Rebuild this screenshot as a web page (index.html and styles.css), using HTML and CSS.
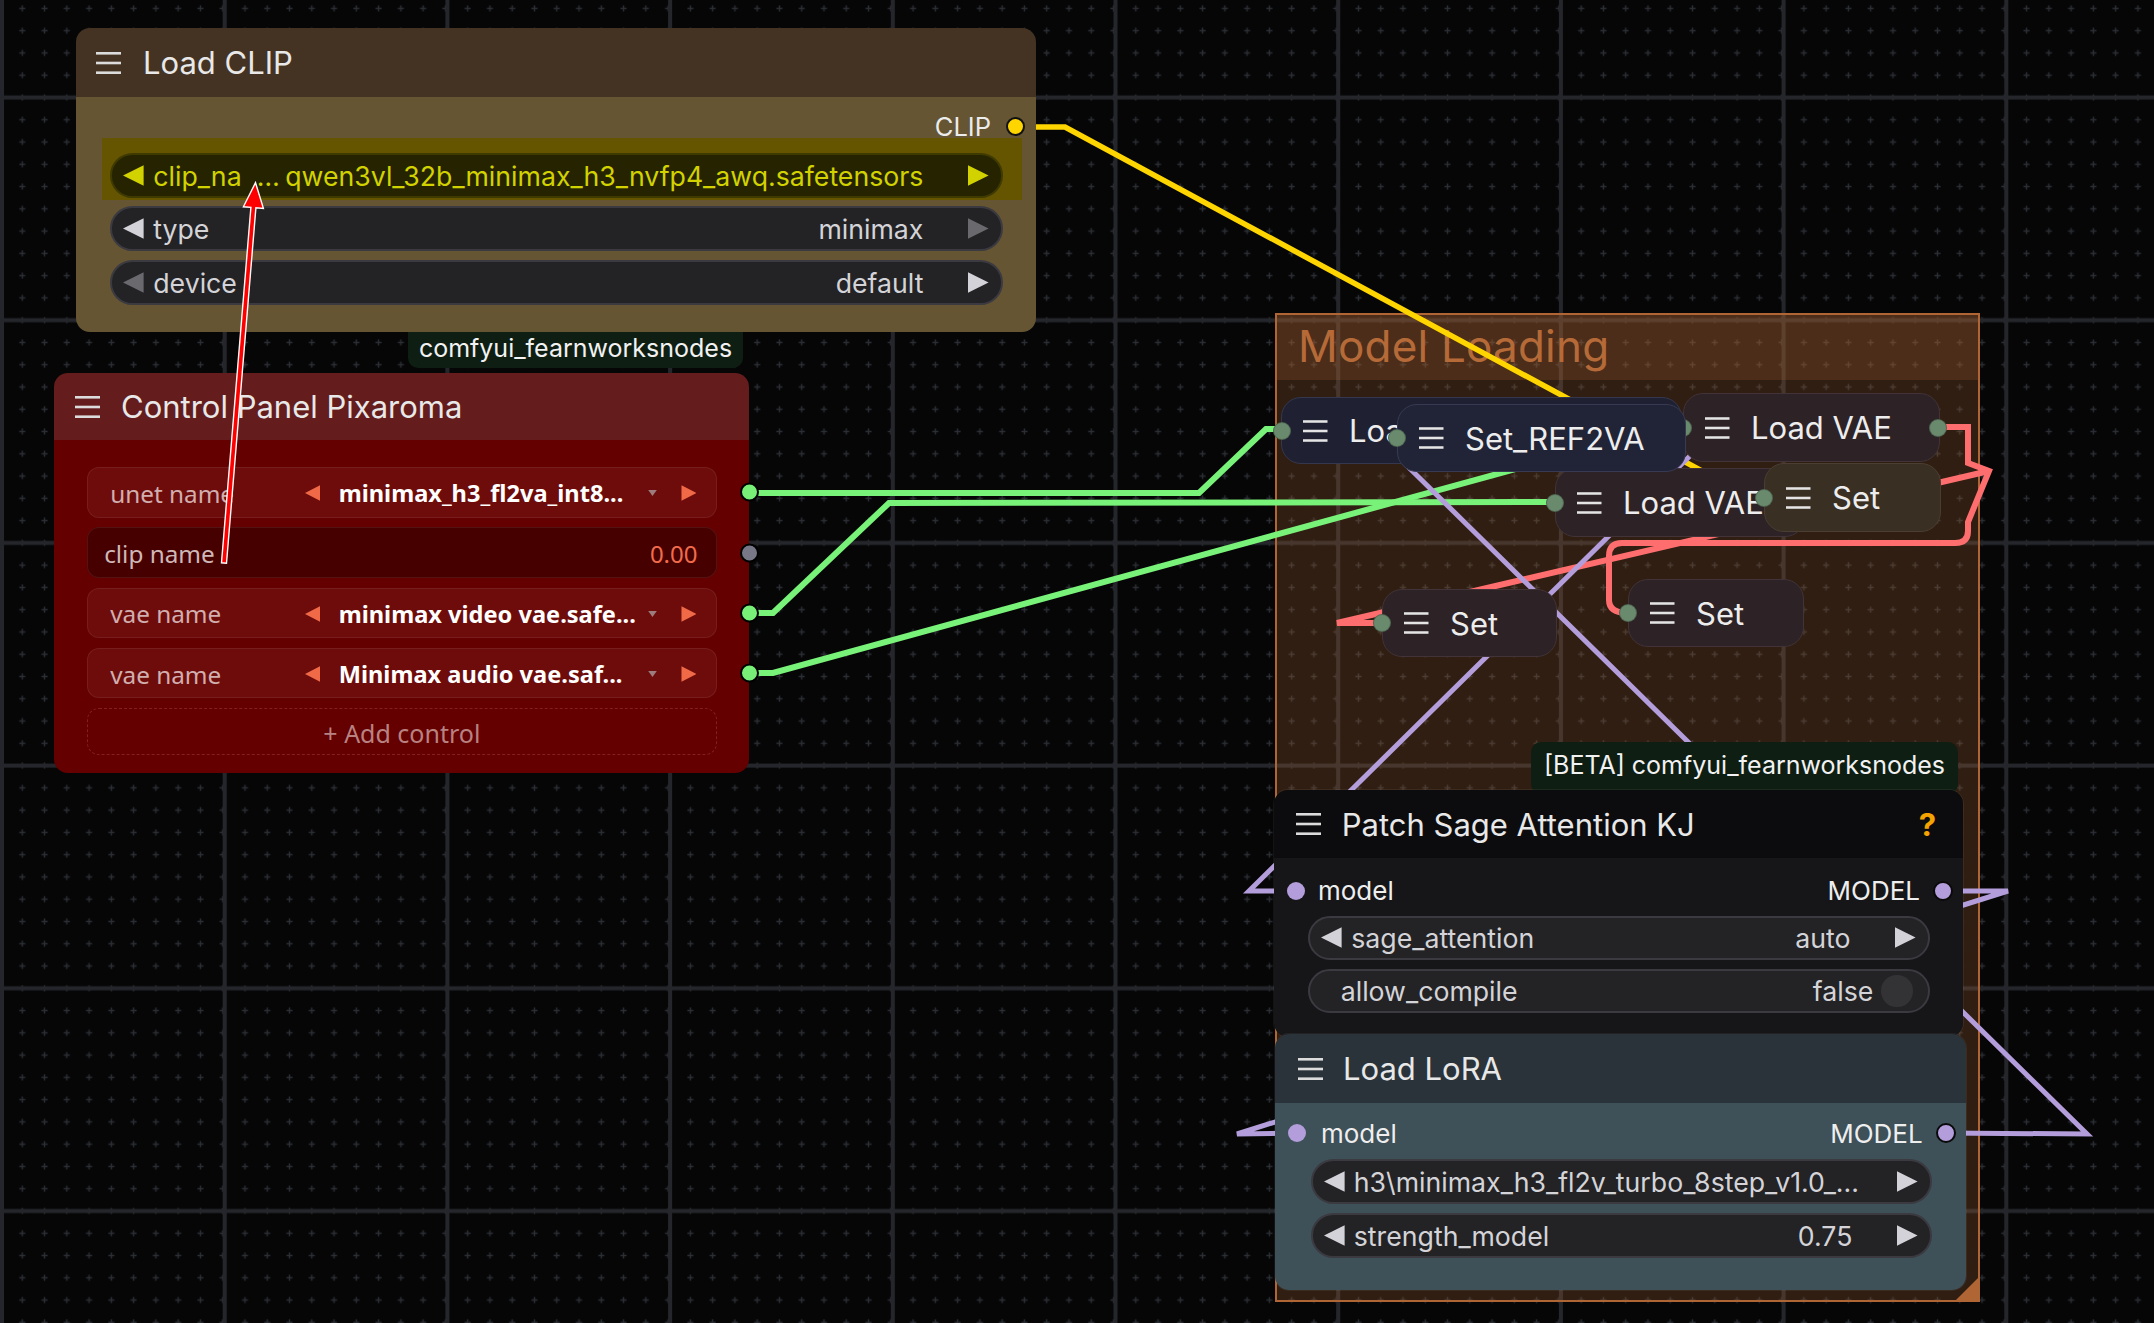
FILE: index.html
```html
<!DOCTYPE html>
<html lang="en">
<head>
<meta charset="utf-8">
<title>ComfyUI canvas</title>
<link rel="stylesheet" href="styles.css">
</head>
<body>
<div class="canvas">

  <svg class="layer" viewBox="0 0 2154 1323" width="2154" height="1323">
    <defs>
      <pattern id="dots" patternUnits="userSpaceOnUse" x="-11.135" y="-2.735" width="22.27" height="22.27">
        <rect x="8.135" y="10.435" width="6" height="1.4" fill="#2b2e34"/>
        <rect x="10.435" y="8.135" width="1.4" height="6" fill="#2b2e34"/>
      </pattern>
      <pattern id="lines" patternUnits="userSpaceOnUse" x="0" y="0" width="222.7" height="222.7">
        <rect x="0" y="0" width="4" height="222.7" fill="#24262b"/>
        <rect x="0" y="95.5" width="222.7" height="4" fill="#24262b"/>
      </pattern>
    </defs>
    <rect width="2154" height="1323" fill="#060607"/>
    <rect width="2154" height="1323" fill="url(#dots)"/>
    <rect width="2154" height="1323" fill="url(#lines)"/>
  </svg>

  <section class="group">
    <div class="group-head">Model Loading</div>
    <div class="group-resize"></div>
  </section>

  <svg class="layer links" viewBox="0 0 2154 1323" width="2154" height="1323">
    <polyline class="lk lk-clip" points="1034,127 1065,127 1750,497 1764,497"/>
    <polyline class="lk lk-green" points="749,493 1199,493 1266,429 1282,429"/>
    <polyline class="lk lk-green" points="749,613 773,613 889,503 1555,502"/>
    <polyline class="lk lk-green" points="749,673 773,673 1668,427 1683,427"/>
    <path class="lk lk-vae" d="M1939,427 L1968,427 L1968,463 L1989,471 L1968,522 L1968,531 Q1968,543 1955,543 L1622,543 Q1609,543 1609,556 L1609,600 Q1609,613 1628,613"/>
    <polyline class="lk lk-vae" points="1989,471 1337,623 1382,623"/>
    <polyline class="lk lk-model" points="1945,1133 2087,1134 1390,449"/>
    <polyline class="lk lk-model" points="1700,446 1249,891 1296,891"/>
    <polyline class="lk lk-model" points="1943,891 2008,891 1237,1134 1297,1133"/>
  </svg>

  <div class="badge badge-cp">comfyui_fearnworksnodes</div>

  <div class="node n-clip">
    <div class="node-title">
      <svg class="menu" viewBox="0 0 25 22"><rect y="0" width="25" height="2.6"/><rect y="9.7" width="25" height="2.6"/><rect y="19.4" width="25" height="2.6"/></svg>
      <span>Load CLIP</span>
    </div>
    <div class="node-body">
      <div class="out-row">
        <span>CLIP</span>
        <span class="port port-clip"></span>
      </div>
      <div class="hl">
        <div class="pill pill-hl">
          <svg class="arr" viewBox="0 0 22 21"><path d="M21 0L0 10.5L21 21Z"/></svg>
          <span class="lbl">clip_na  …</span>
          <span class="val">qwen3vl_32b_minimax_h3_nvfp4_awq.safetensors</span>
          <svg class="arr" viewBox="0 0 22 21"><path d="M1 0L22 10.5L1 21Z"/></svg>
        </div>
      </div>
      <div class="pill pill-clip">
        <svg class="arr" viewBox="0 0 22 21"><path d="M21 0L0 10.5L21 21Z"/></svg>
        <span class="lbl">type</span>
        <span class="val">minimax</span>
        <svg class="arr dim" viewBox="0 0 22 21"><path d="M1 0L22 10.5L1 21Z"/></svg>
      </div>
      <div class="pill pill-clip pill-gap">
        <svg class="arr dim" viewBox="0 0 22 21"><path d="M21 0L0 10.5L21 21Z"/></svg>
        <span class="lbl">device</span>
        <span class="val">default</span>
        <svg class="arr" viewBox="0 0 22 21"><path d="M1 0L22 10.5L1 21Z"/></svg>
      </div>
    </div>
  </div>

  <div class="node n-cp">
    <div class="node-title">
      <svg class="menu" viewBox="0 0 25 22"><rect y="0" width="25" height="2.6"/><rect y="9.7" width="25" height="2.6"/><rect y="19.4" width="25" height="2.6"/></svg>
      <span>Control Panel Pixaroma</span>
    </div>
    <div class="node-body">
      <div class="cp-row">
        <span class="cp-lbl">unet name</span>
        <svg class="cp-arr" viewBox="0 0 16 16"><path d="M15.5 0L0 8L15.5 16Z"/></svg>
        <span class="cp-val">minimax_h3_fl2va_int8...</span>
        <svg class="cp-drop" viewBox="0 0 10 7"><path d="M0 0L10 0L5 7Z"/></svg>
        <svg class="cp-arr" viewBox="0 0 16 16"><path d="M0.5 0L16 8L0.5 16Z"/></svg>
        <span class="port port-green"></span>
      </div>
      <div class="cp-row cp-num">
        <span class="cp-lbl">clip name</span>
        <span class="cp-numval">0.00</span>
        <span class="port port-gray"></span>
      </div>
      <div class="cp-row">
        <span class="cp-lbl">vae name</span>
        <svg class="cp-arr" viewBox="0 0 16 16"><path d="M15.5 0L0 8L15.5 16Z"/></svg>
        <span class="cp-val">minimax video vae.safe...</span>
        <svg class="cp-drop" viewBox="0 0 10 7"><path d="M0 0L10 0L5 7Z"/></svg>
        <svg class="cp-arr" viewBox="0 0 16 16"><path d="M0.5 0L16 8L0.5 16Z"/></svg>
        <span class="port port-green"></span>
      </div>
      <div class="cp-row">
        <span class="cp-lbl">vae name</span>
        <svg class="cp-arr" viewBox="0 0 16 16"><path d="M15.5 0L0 8L15.5 16Z"/></svg>
        <span class="cp-val">Minimax audio vae.saf...</span>
        <svg class="cp-drop" viewBox="0 0 10 7"><path d="M0 0L10 0L5 7Z"/></svg>
        <svg class="cp-arr" viewBox="0 0 16 16"><path d="M0.5 0L16 8L0.5 16Z"/></svg>
        <span class="port port-green"></span>
      </div>
      <div class="cp-add">+ Add control</div>
    </div>
  </div>

  <div class="cnode c-lo"><span class="port port-c port-in"></span>
    <svg class="menu" viewBox="0 0 25 22"><rect y="0" width="25" height="2.6"/><rect y="9.7" width="25" height="2.6"/><rect y="19.4" width="25" height="2.6"/></svg>
    <span class="ctext">Load</span>
  </div>
  <div class="cnode c-vae1"><span class="port port-c port-in"></span>
    <svg class="menu" viewBox="0 0 25 22"><rect y="0" width="25" height="2.6"/><rect y="9.7" width="25" height="2.6"/><rect y="19.4" width="25" height="2.6"/></svg>
    <span class="ctext">Load VAE</span>
    <span class="port port-c port-out"></span>
  </div>
  <div class="cnode c-vae2"><span class="port port-c port-in"></span>
    <svg class="menu" viewBox="0 0 25 22"><rect y="0" width="25" height="2.6"/><rect y="9.7" width="25" height="2.6"/><rect y="19.4" width="25" height="2.6"/></svg>
    <span class="ctext">Load VAE</span>
  </div>
  <div class="cnode c-ref"><span class="port port-c port-in"></span>
    <svg class="menu" viewBox="0 0 25 22"><rect y="0" width="25" height="2.6"/><rect y="9.7" width="25" height="2.6"/><rect y="19.4" width="25" height="2.6"/></svg>
    <span class="ctext">Set_REF2VA</span>
  </div>
  <div class="cnode c-setb"><span class="port port-c port-in"></span>
    <svg class="menu" viewBox="0 0 25 22"><rect y="0" width="25" height="2.6"/><rect y="9.7" width="25" height="2.6"/><rect y="19.4" width="25" height="2.6"/></svg>
    <span class="ctext">Set</span>
  </div>
  <div class="cnode c-setl"><span class="port port-c port-in"></span>
    <svg class="menu" viewBox="0 0 25 22"><rect y="0" width="25" height="2.6"/><rect y="9.7" width="25" height="2.6"/><rect y="19.4" width="25" height="2.6"/></svg>
    <span class="ctext">Set</span>
  </div>
  <div class="cnode c-setr"><span class="port port-c port-in"></span>
    <svg class="menu" viewBox="0 0 25 22"><rect y="0" width="25" height="2.6"/><rect y="9.7" width="25" height="2.6"/><rect y="19.4" width="25" height="2.6"/></svg>
    <span class="ctext">Set</span>
  </div>

  <div class="badge badge-beta">[BETA] comfyui_fearnworksnodes</div>

  <div class="node n-sage">
    <div class="node-title">
      <svg class="menu" viewBox="0 0 25 22"><rect y="0" width="25" height="2.6"/><rect y="9.7" width="25" height="2.6"/><rect y="19.4" width="25" height="2.6"/></svg>
      <span>Patch Sage Attention KJ</span>
      <span class="help">?</span>
    </div>
    <div class="node-body">
      <div class="slot-row">
        <span class="port port-model"></span>
        <span class="slot-in">model</span>
        <span class="slot-out">MODEL</span>
        <span class="port port-model port-ring"></span>
      </div>
      <div class="pill pill-w">
        <svg class="arr" viewBox="0 0 22 21"><path d="M21 0L0 10.5L21 21Z"/></svg>
        <span class="lbl">sage_attention</span>
        <span class="val">auto</span>
        <svg class="arr" viewBox="0 0 22 21"><path d="M1 0L22 10.5L1 21Z"/></svg>
      </div>
      <div class="pill pill-w pill-toggle">
        <span class="lbl">allow_compile</span>
        <span class="tval">false</span>
        <span class="knob"></span>
      </div>
    </div>
  </div>

  <div class="node n-lora">
    <div class="node-title">
      <svg class="menu" viewBox="0 0 25 22"><rect y="0" width="25" height="2.6"/><rect y="9.7" width="25" height="2.6"/><rect y="19.4" width="25" height="2.6"/></svg>
      <span>Load LoRA</span>
    </div>
    <div class="node-body">
      <div class="slot-row">
        <span class="port port-model"></span>
        <span class="slot-in">model</span>
        <span class="slot-out">MODEL</span>
        <span class="port port-model port-ring"></span>
      </div>
      <div class="pill pill-w">
        <svg class="arr" viewBox="0 0 22 21"><path d="M21 0L0 10.5L21 21Z"/></svg>
        <span class="lbl lbl-lora">h3\minimax_h3_fl2v_turbo_8step_v1.0_...</span>
        <svg class="arr" viewBox="0 0 22 21"><path d="M1 0L22 10.5L1 21Z"/></svg>
      </div>
      <div class="pill pill-w pill-gap2">
        <svg class="arr" viewBox="0 0 22 21"><path d="M21 0L0 10.5L21 21Z"/></svg>
        <span class="lbl">strength_model</span>
        <span class="val">0.75</span>
        <svg class="arr" viewBox="0 0 22 21"><path d="M1 0L22 10.5L1 21Z"/></svg>
      </div>
    </div>
  </div>

  <svg class="layer overlay" viewBox="0 0 2154 1323" width="2154" height="1323">
    <polygon class="red-arrow" points="221.5,562.8 250.9,207.4 243.4,206.8 255.5,182.7 263.4,208.4 255.9,207.8 226.5,563.2"/>
  </svg>
</div>
</body>
</html>
```

FILE: styles.css
```css
* { box-sizing: border-box; }
html, body { margin: 0; padding: 0; background: #060607; }
body { width: 2154px; height: 1323px; overflow: hidden; font-family: Inter, "Noto Sans", sans-serif; }

.canvas { position: relative; width: 2154px; height: 1323px; overflow: hidden; background: #060607; }
.layer { position: absolute; left: 0; top: 0; width: 2154px; height: 1323px; }
.links, .overlay { pointer-events: none; }

/* links */
.lk { fill: none; stroke-linejoin: miter; stroke-miterlimit: 4; }
.lk-clip { stroke: #ffd500; stroke-width: 5.5; }
.lk-green { stroke: #78f278; stroke-width: 6; }
.lk-vae { stroke: #ff6e6e; stroke-width: 6; }
.lk-model { stroke: #b39ddb; stroke-width: 5; }
.red-arrow { fill: #ff0000; stroke: #ffffff; stroke-width: 1.4; stroke-linejoin: miter; }

/* group */
.group {
  position: absolute; left: 1275px; top: 313px; width: 705px; height: 989px;
  border: 2px solid #b06634; background: rgba(176, 102, 52, 0.25);
}
.group-head {
  height: 65px; background: rgba(176, 102, 52, 0.22);
  display: flex; align-items: center; padding-left: 21px; padding-bottom: 4px;
  font-size: 44px; color: #b56a38; letter-spacing: 0.2px;
}
.group-resize {
  position: absolute; right: 0; bottom: 0; width: 0; height: 0;
  border-style: solid; border-width: 0 0 22px 22px;
  border-color: transparent transparent #b06634 transparent;
}

/* badges */
.badge {
  position: absolute; display: flex; justify-content: center; align-items: center;
  background: #0f1e12; color: #f2f2f2; font-size: 25px; border-radius: 10px; white-space: nowrap;
}
.badge-cp { left: 408px; top: 318px; width: 335px; height: 50px; padding-top: 10px; }
.badge-beta { left: 1531px; top: 742px; width: 427px; height: 52px; padding-bottom: 6px; }

/* nodes */
.node { position: absolute; border-radius: 14px; display: flex; flex-direction: column; box-shadow: 0 0 0 1px rgba(255,255,255,0.06); }
.node-title {
  flex: none; display: flex; align-items: center; gap: 22px; padding-left: 20px;
  font-size: 31px; color: #e8e8e8; border-radius: 14px 14px 0 0; white-space: nowrap;
}
.menu { width: 25px; height: 22px; flex: none; fill: #dcdcdc; }
.node-body { flex: 1; display: flex; flex-direction: column; border-radius: 0 0 14px 14px; }

/* ports */
.port { display: block; flex: none; border-radius: 50%; }

/* Load CLIP */
.n-clip { left: 76px; top: 28px; width: 960px; height: 304px; box-shadow: none; }
.n-clip .node-title { height: 69px; background: #443322; }
.n-clip .node-body { background: #665533; }
.out-row {
  height: 41px; padding-top: 18px; padding-right: 11px;
  display: flex; justify-content: flex-end; align-items: center; gap: 15px;
  font-size: 25.5px; color: #ececec;
}
.port-clip { width: 19px; height: 19px; background: #ffd500; border: 2px solid #111; }
.hl {
  height: 62px; margin: 0 14px 0 26px; background: #665500;
  display: flex; align-items: flex-end; padding: 0 19px 2px 8px;
}

.pill {
  height: 45px; border-radius: 23px; display: flex; align-items: center;
  padding: 0 12.5px 0 11px; background: #232326; border: 2px solid #3a3a40;
  font-size: 26.7px; color: #d4d4d8; white-space: nowrap;
}
.pill .arr { width: 21.6px; height: 21px; flex: none; fill: #d2d2d8; }
.pill .arr.dim { fill: #6a6a6e; }
.pill .lbl { flex: 1; margin-left: 8.7px; overflow: hidden; white-space: pre; }
.pill .val { margin-right: 43.5px; }
.pill-hl { flex: 1; background: #252300; border-color: #3e3a00; color: #d2d200; }
.pill-hl .arr { fill: #d2d200; }
.pill-clip { margin: 6px 33px 0 34px; }
.pill-gap { margin-top: 9px; }

/* Control Panel */
.n-cp { left: 54px; top: 373px; width: 695px; height: 400px; box-shadow: none; }
.n-cp .node-title { height: 67px; background: #641c1c; gap: 21px; padding-left: 21px; }
.n-cp .node-body { background: #640000; padding: 27px 32px 0 32.7px; gap: 9.8px; }
.cp-row {
  position: relative; height: 50.5px; flex: none; border-radius: 12px;
  background: #6e0c0c; border: 1.5px solid rgba(255, 255, 255, 0.07);
  display: flex; align-items: center; padding: 2px 19.8px 0 22.5px;
  font-family: "Noto Sans", sans-serif; white-space: nowrap;
}
.cp-lbl { width: 195px; flex: none; font-size: 24.3px; color: #d2aeae; }
.cp-arr { width: 15.5px; height: 16px; flex: none; fill: #f06a48; }
.cp-val { flex: 1; margin-left: 18px; font-size: 23.6px; font-weight: 700; color: #ffffff; overflow: hidden; }
.cp-drop { width: 9px; height: 6px; flex: none; margin-right: 24px; fill: #9c7c7c; }
.cp-num { background: #470000; padding-left: 16.5px; padding-right: 18.5px; }
.cp-num .cp-lbl { flex: 1; color: #cfb8b8; }
.cp-numval { font-size: 24px; color: #f06c4c; }
.port-green, .port-gray {
  position: absolute; right: -42.5px; top: 50%; transform: translateY(-50%);
  width: 19px; height: 19px; border: 2px solid #000;
}
.port-green { background: #78f078; }
.port-gray { background: #777788; }
.cp-add {
  height: 47px; flex: none; border-radius: 12px; border: 1.5px dashed rgba(255, 140, 140, 0.22);
  display: flex; justify-content: center; align-items: center; padding-top: 2px;
  font-family: "Noto Sans", sans-serif; font-size: 25px; color: #b98282;
}

/* collapsed nodes */
.cnode {
  position: absolute; height: 68px; border-radius: 20px;
  display: flex; align-items: center; gap: 21.5px; padding-left: 21px;
  font-size: 31px; color: #ededed; white-space: nowrap;
  background: #2d2225; border: 1.5px solid #413337;
}
.cnode .menu { fill: #e4e4e4; width: 24.5px; }
.port-c {
  position: absolute; top: 50%; transform: translateY(-50%);
  width: 18px; height: 18px; background: #6a8a6e; border: 1px solid rgba(0, 0, 0, 0.25);
}
.port-in { left: -10.5px; }
.port-out { right: -8px; }
.c-lo { left: 1281px; top: 397px; width: 401px; height: 67px; background: #1f2133; border-color: #34374d; }
.c-lo .port-in { left: -9.5px; }
.c-ref { left: 1397px; top: 404px; width: 289px; background: #212336; border-color: #373a52; }
.c-vae1 { left: 1683px; top: 393px; width: 257px; height: 69px; }
.c-vae2 { left: 1555px; top: 468px; width: 250px; height: 69px; }
.c-setb { left: 1764px; top: 463px; width: 177px; height: 69px; background: #3a2f23; border-color: #4a3d31; }
.c-setl { left: 1382px; top: 589px; width: 175px; }
.c-setr { left: 1628px; top: 579px; width: 176px; }

/* Patch Sage */
.n-sage { left: 1274px; top: 790px; width: 689px; height: 247px; }
.n-sage .node-title { height: 68px; background: #0c0c0e; padding-left: 21.7px; gap: 21px; }
.help { margin-left: auto; margin-right: 27px; color: #f5a300; font-weight: 700; font-size: 31px; }
.n-sage .node-body { background: #161618; padding-top: 14px; }
.slot-row {
  height: 37px; flex: none; display: flex; align-items: center;
  padding: 0 10.5px 0 12.6px; font-size: 26px; color: #eeeeee; white-space: nowrap;
}
.port-model { width: 18px; height: 18px; background: #b39ddb; }
.port-ring { width: 20px; height: 20px; border: 2.5px solid #0a0a0a; }
.slot-in { flex: 1; margin-left: 13.4px; }
.slot-out { margin-right: 12.5px; }
.pill-w { flex: none; margin: 6.5px 33px 0 34px; height: 44.5px; }
.pill-toggle { margin-top: 8.6px; padding-left: 30.7px; padding-right: 15.5px; }
.pill-toggle .lbl { margin-left: 0; }
.tval { margin-right: 7.7px; }
.knob { width: 31.5px; height: 31.5px; border-radius: 50%; background: #333336; flex: none; }

/* Load LoRA */
.n-lora { left: 1275px; top: 1034px; width: 691px; height: 256px; }
.n-lora .node-title { height: 69px; background: #2a3339; padding-left: 23px; gap: 20px; }
.n-lora .node-body { background: #3e5058; padding-top: 11.5px; }
.n-lora .slot-row { padding-left: 13px; padding-right: 10px; }
.n-lora .slot-in { margin-left: 15px; }
.n-lora .slot-out { margin-right: 13.3px; }
.n-lora .pill-w { margin: 7.5px 34px 0 35.5px; height: 45px; }
.n-lora .pill-w .lbl-lora { margin-right: 36px; overflow: visible; }
.n-lora .pill-gap2 { margin-top: 9px; }
```
